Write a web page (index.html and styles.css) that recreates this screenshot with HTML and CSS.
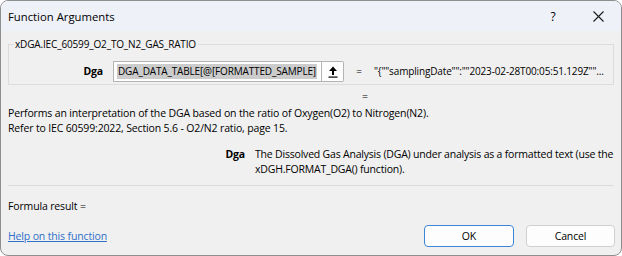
FILE: index.html
```html
<!DOCTYPE html>
<html lang="en">
<head>
    <meta charset="UTF-8">
    <title>Function Arguments</title>
    <link rel="stylesheet" href="styles.css">
</head>
<body>
    <div class="dialog">
        <div class="titlebar">
            <span class="title">Function Arguments</span>
            <span class="title-btn help-btn">?</span>
            <span class="title-btn close-btn">
                <svg width="11" height="11" viewBox="0 0 11 11">
                    <path d="M0.5 0.5 L10.5 10.5 M10.5 0.5 L0.5 10.5" stroke="#1b1b1b" stroke-width="1.1" fill="none"/>
                </svg>
            </span>
        </div>
        <div class="content">
            <fieldset class="group">
                <legend>xDGA.IEC_60599_O2_TO_N2_GAS_RATIO</legend>
                <div class="arg-row">
                    <label class="arg-name">Dga</label>
                    <div class="ref-input"><span class="selected">DGA_DATA_TABLE[@[FORMATTED_SAMPLE]</span></div>
                    <button class="collapse-btn">
                        <svg width="10" height="12" viewBox="0 0 10 12">
                            <path d="M5 0.5 L9 5 L6 5 L6 9 L4 9 L4 5 L1 5 Z" fill="#000"/>
                            <rect x="0.5" y="10.5" width="9" height="1.2" fill="#000"/>
                        </svg>
                    </button>
                    <span class="eq">=</span>
                    <span class="arg-value">"{""samplingDate"":""2023-02-28T00:05:51.129Z""...</span>
                </div>
            </fieldset>
            <div class="func-value"><span class="eq">=</span></div>
            <p class="desc">Performs an interpretation of the DGA based on the ratio of Oxygen(O2) to Nitrogen(N2).<br>Refer to IEC 60599:2022, Section 5.6 - O2/N2 ratio, page 15.</p>
            <div class="arg-desc">
                <b>Dga</b>
                <p>The Dissolved Gas Analysis (DGA) under analysis as a formatted text (use the xDGH.FORMAT_DGA() function).</p>
            </div>
            <hr class="sep">
            <div class="formula-result">Formula result =</div>
            <div class="footer">
                <a href="#" class="help-link">Help on this function</a>
                <div class="buttons">
                    <button class="btn btn-default">OK</button>
                    <button class="btn">Cancel</button>
                </div>
            </div>
        </div>
    </div>
</body>
</html>
```

FILE: styles.css
```css
* {
    box-sizing: border-box;
}
body {
    margin: 0;
    background-color: #ffffff;
    font-family: "Open Sans", "Noto Sans", sans-serif;
    font-size: 10.5px;
    letter-spacing: -0.15px;
    line-height: 15px;
    color: #000;
}
.dialog {
    width: 622px;
    height: 256px;
    border: 1px solid #8e8e8e;
    border-radius: 8px;
    background-color: #f0f0f0;
    overflow: hidden;
    display: flex;
    flex-direction: column;
}
.titlebar {
    height: 30px;
    flex: none;
    display: flex;
    align-items: center;
    padding-left: 7px;
    background-color: #eef1f8;
}
.title {
    flex: 1;
    font-size: 11.3px;
    letter-spacing: 0;
}
.title-btn {
    height: 30px;
    display: flex;
    align-items: center;
    justify-content: center;
}
.help-btn {
    width: 44px;
    font-size: 12px;
}
.close-btn {
    width: 46px;
}
.content {
    flex: 1;
    padding: 0 7px;
}
.group {
    margin: 6px 0 0;
    padding: 0 5px 1px;
    border: 1px solid #dcdcdc;
    font-size: 10px;
}
.group legend {
    padding: 0 2px;
    margin-left: -1px;
}
.arg-row {
    display: flex;
    align-items: center;
    height: 23px;
    margin-top: 8px;
}
.arg-name {
    width: 89px;
    text-align: right;
    font-weight: bold;
    font-size: 10.5px;
    margin-right: 10px;
}
.ref-input {
    width: 209px;
    height: 21px;
    border: 1px solid #b4b4b4;
    background-color: #fff;
    padding: 2px 2px 0 3px;
    white-space: nowrap;
    overflow: hidden;
}
.selected {
    background-color: #cccccc;
    display: inline-block;
    padding: 0 1px;
}
.collapse-btn {
    width: 22px;
    height: 21px;
    margin: 0;
    padding: 0;
    border: 1px solid #b4b4b4;
    border-left: none;
    border-radius: 0 2px 2px 0;
    background-color: #fdfdfd;
    display: flex;
    align-items: center;
    justify-content: center;
}
.eq {
    width: 30px;
    text-align: center;
}
.arg-value {
    white-space: nowrap;
}
.func-value {
    margin-top: 4px;
    padding-left: 342px;
}
.func-value .eq {
    display: inline-block;
}
.desc {
    margin: 2px 0 0;
}
.arg-desc {
    display: grid;
    grid-template-columns: 237px 1fr;
    column-gap: 10px;
    margin-top: 11px;
}
.arg-desc b {
    text-align: right;
}
.arg-desc p {
    margin: 0;
    letter-spacing: -0.2px;
}
.sep {
    margin: 8px 0 0;
    border: none;
    border-top: 1px solid #dcdcdc;
}
.formula-result {
    margin-top: 13px;
}
.footer {
    display: flex;
    align-items: center;
    justify-content: space-between;
    margin-top: 11px;
    margin-right: -1px;
}
.help-link {
    color: #2f6fc9;
}
.buttons {
    display: flex;
    gap: 12px;
}
.btn {
    width: 89px;
    height: 22px;
    font-family: inherit;
    font-size: 10.5px;
    letter-spacing: inherit;
    background-color: #fdfdfd;
    border: 1px solid #d0d0d0;
    border-radius: 4px;
    color: #000;
}
.btn-default {
    width: 90px;
    border-color: #3b86d6;
}
```
